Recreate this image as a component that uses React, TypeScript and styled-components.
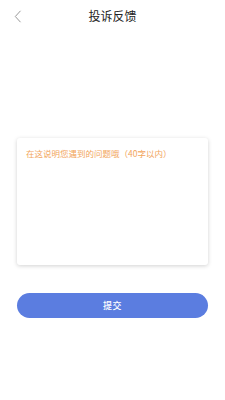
import React from "react";
import styled, { createGlobalStyle } from "styled-components";

const Global = createGlobalStyle`
  html, body { margin: 0; padding: 0; background: #ffffff; }
  body { font-family: "Noto Sans CJK SC", "Noto Sans", sans-serif; }
`;

const Page = styled.div`
  width: 225px;
  height: 400px;
  display: flex;
  flex-direction: column;
  background: #fff;
`;

const Header = styled.div`
  height: 32px;
  display: grid;
  grid-template-columns: 40px 1fr 40px;
  align-items: center;
`;

const Back = styled.button`
  border: 0;
  background: none;
  padding: 0 0 0 14px;
  height: 32px;
  display: flex;
  align-items: center;
  cursor: pointer;
`;

const Title = styled.h1`
  margin: 0;
  text-align: center;
  font-size: 12px;
  font-weight: 400;
  color: #222;
  line-height: 32px;
`;

const Body = styled.div`
  padding: 106px 17px 0 17px;
  display: flex;
  flex-direction: column;
`;

const Card = styled.textarea`
  box-sizing: border-box;
  width: 191px;
  height: 127px;
  border: none;
  border-radius: 3px;
  background: #fff;
  box-shadow: 0 1px 4px rgba(0, 0, 0, 0.18);
  padding: 8px 9px;
  font-family: "Noto Sans CJK SC", sans-serif;
  font-size: 8.5px;
  line-height: 14px;
  color: #333;
  resize: none;
  outline: none;
  &::placeholder { color: #f2a55c; }
`;

const Submit = styled.button`
  margin-top: 28px;
  width: 191px;
  height: 25px;
  border: none;
  border-radius: 13px;
  background: #5b7de0;
  color: #fff;
  font-family: "Noto Sans CJK SC", sans-serif;
  font-size: 9px;
  font-weight: 500;
  letter-spacing: 0.5px;
  cursor: pointer;
`;

export default function App() {
  return (
    <>
      <Global />
      <Page>
        <Header>
          <Back aria-label="返回">
            <svg width="8" height="13" viewBox="0 0 8 13">
              <path d="M6.5 0.8 L1.3 6.5 L6.5 12.2" fill="none" stroke="#999" strokeWidth="1" />
            </svg>
          </Back>
          <Title>投诉反馈</Title>
          <span />
        </Header>
        <Body>
          <Card placeholder="在这说明您遇到的问题哦（40字以内）" maxLength={40} />
          <Submit>提交</Submit>
        </Body>
      </Page>
    </>
  );
}
